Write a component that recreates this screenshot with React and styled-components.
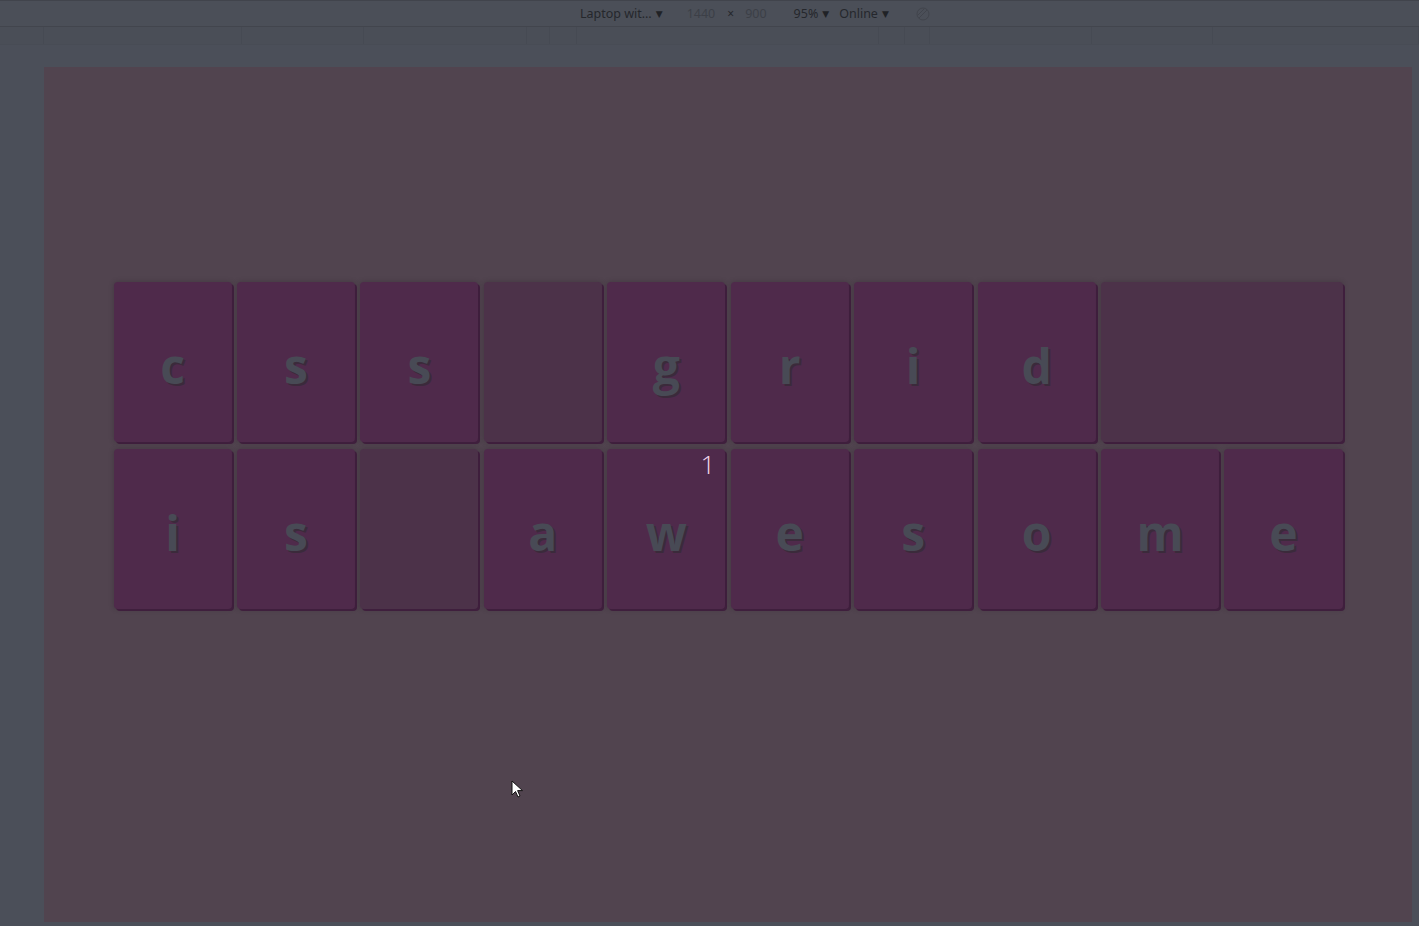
import React from 'react';
import styled, {createGlobalStyle} from 'styled-components';

const Global = createGlobalStyle`
	html, body {
		margin: 0;
		padding: 0;
		background: #4b4f59;
		overflow: hidden;
	}
`

const Screen = styled.div`
	position: relative;
	width: 1419px;
	height: 926px;
	background: #4b4f59;
	display: flex;
	flex-direction: column;
	font-family: "Noto Sans", "DejaVu Sans", sans-serif;
`

const Toolbar = styled.div`
	height: 27px;
	flex: none;
	display: flex;
	align-items: center;
	padding-left: 580px;
	box-sizing: border-box;
	background: #4b4f58;
	border-top: 1px solid #41444c;
	border-bottom: 1px solid #42454d;
	font-size: 12.5px;
	color: #25272c;
`

const Item = styled.span`
	display: inline-flex;
	align-items: center;
	margin-left: ${p => p.gap || 0}px;
	color: ${p => p.dim ? '#3c3f47' : '#25272c'};
	white-space: nowrap;
`

const Caret = styled.span`
	font-size: 9px;
	margin-left: 4px;
	color: #202226;
`

const Ruler = styled.div`
	height: 17px;
	flex: none;
	display: grid;
	grid-template-columns: 44px 198px 122px 163px 23px 27px 302px 26px 25px 162px 121px 1fr;
	background: #4a4e57;
	border-bottom: 1px solid #484c55;
`

const RulerCell = styled.div`
	border-right: 1px solid #464a53;
`

const Stage = styled.div`
	flex: 1;
	padding: 22px 7px 4px 44px;
	display: flex;
`

const Page = styled.div`
	flex: 1;
	background: #51444f;
	padding-top: 215px;
	display: flex;
	justify-content: center;
	align-items: flex-start;
`

const Board = styled.div`
	width: 1229px;
	display: grid;
	grid-template-columns: repeat(10, 1fr);
	grid-auto-rows: 160px;
	column-gap: 5.3px;
	row-gap: 7px;
`

const Tile = styled.div`
	position: relative;
	grid-column: span ${p => p.span || 1};
	border-radius: 4px;
	background: ${p => p.empty ? '#4c3249' : '#4f2a4b'};
	box-shadow: 2px 2px 0 #3f1f3d, 0 0 5px rgba(40, 30, 40, 0.35);
	display: flex;
	align-items: center;
	justify-content: center;
	padding-top: 6px;
	box-sizing: border-box;
	font-family: "Open Sans", "Noto Sans", sans-serif;
	font-weight: 700;
	font-size: 48px;
	color: #484a55;
	text-shadow: 2px 2px 0 #3b2a3b;
`

const Count = styled.span`
	position: absolute;
	top: -3px;
	right: 10px;
	font-family: "Open Sans", sans-serif;
	font-weight: 300;
	font-size: 26px;
	color: #f3d6ec;
	text-shadow: none;
`

const Cursor = styled.svg`
	position: absolute;
	left: 511px;
	top: 780px;
`

const rows = [
	['c', 's', 's', null, 'g', 'r', 'i', 'd', {empty: true, span: 2}],
	['i', 's', null, 'a', 'w', 'e', 's', 'o', 'm', 'e'],
];

const App = () => {
	let tiles = [];
	rows.forEach((row, r) => {
		row.forEach((cell, c) => {
			if (cell === null) {
				tiles.push(<Tile key={r + '-' + c} empty />);
			} else if (typeof cell === 'object') {
				tiles.push(<Tile key={r + '-' + c} empty span={cell.span} />);
			} else {
				tiles.push(
					<Tile key={r + '-' + c}>
						{cell}
						{r === 1 && c === 4 && <Count>1</Count>}
					</Tile>
				);
			}
		});
	});

	return (
		<>
		<Global />
		<Screen>
			<Toolbar>
				<Item>Laptop wit…<Caret>▼</Caret></Item>
				<Item dim gap={24}>1440</Item>
				<Item gap={12} style={{fontSize: '12px'}}>×</Item>
				<Item dim gap={11}>900</Item>
				<Item gap={27}>95%<Caret>▼</Caret></Item>
				<Item gap={10}>Online<Caret>▼</Caret></Item>
				<Item gap={27}>
					<svg width="14" height="14" viewBox="0 0 14 14">
						<circle cx="7" cy="7" r="6" fill="none" stroke="#41444c" strokeWidth="1" />
						<line x1="3" y1="11" x2="11" y2="3" stroke="#41444c" strokeWidth="1" />
						<line x1="2" y1="8" x2="8" y2="2" stroke="#41444c" strokeWidth="1" />
					</svg>
				</Item>
			</Toolbar>
			<Ruler>
				{Array.from({length: 12}).map((_, i) => <RulerCell key={i} />)}
			</Ruler>
			<Stage>
				<Page>
					<Board>
						{tiles}
					</Board>
				</Page>
			</Stage>
			<Cursor width="14" height="20" viewBox="0 0 14 20">
				<path d="M1 1 L1 15 L4.5 11.5 L7 17 L9 16 L6.6 10.6 L11.5 10.6 Z" fill="#ffffff" stroke="#111" strokeWidth="1" strokeLinejoin="round" />
			</Cursor>
		</Screen>
		</>
	);
}

export default App;
